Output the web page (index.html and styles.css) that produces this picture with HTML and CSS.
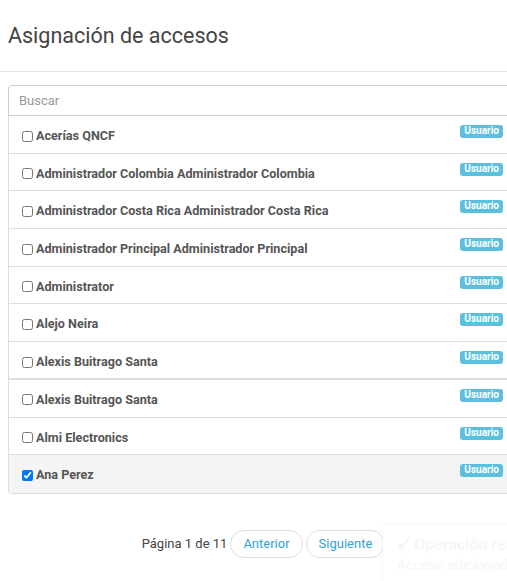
FILE: index.html
```html
<!DOCTYPE html>
<html lang="es">
<head>
  <meta charset="UTF-8">
  <meta name="viewport" content="width=device-width, initial-scale=1.0">
  <title>Asignación de accesos</title>
  <link rel="stylesheet" href="styles.css">
</head>
<body>
  <div class="modal">
    <div class="modal-header">
      <h4>Asignación de accesos</h4>
    </div>
    <div class="modal-body">
      <input type="text" class="search" placeholder="Buscar">
      <ul class="list-group">
        <li class="item"><label><input type="checkbox"> Acerías QNCF</label><span class="badge">Usuario</span></li>
        <li class="item"><label><input type="checkbox"> Administrador Colombia Administrador Colombia</label><span class="badge">Usuario</span></li>
        <li class="item"><label><input type="checkbox"> Administrador Costa Rica Administrador Costa Rica</label><span class="badge">Usuario</span></li>
        <li class="item"><label><input type="checkbox"> Administrador Principal Administrador Principal</label><span class="badge">Usuario</span></li>
        <li class="item"><label><input type="checkbox"> Administrator</label><span class="badge">Usuario</span></li>
        <li class="item"><label><input type="checkbox"> Alejo Neira</label><span class="badge">Usuario</span></li>
        <li class="item item-split"><label><input type="checkbox"> Alexis Buitrago Santa</label><span class="badge">Usuario</span></li>
        <li class="item"><label><input type="checkbox"> Alexis Buitrago Santa</label><span class="badge">Usuario</span></li>
        <li class="item"><label><input type="checkbox"> Almi Electronics</label><span class="badge">Usuario</span></li>
        <li class="item active"><label><input type="checkbox" checked> Ana Perez</label><span class="badge">Usuario</span></li>
      </ul>
      <div class="pager">
        <span class="pager-info">Página 1 de 11</span>
        <button class="pill">Anterior</button>
        <button class="pill">Siguiente</button>
      </div>
    </div>
  </div>

  <!-- toast apareciendo -->
  <div class="toast">
    <div class="toast-title">&#10004; Operación realizada</div>
    <div class="toast-msg">Acceso adicionado.</div>
  </div>
</body>
</html>
```
FILE: styles.css
```css
body {
  margin: 0;
  font-family: Roboto, Arial, sans-serif;
  background-color: #fff;
  color: #555;
  overflow: hidden;
}

.modal {
  width: 527px;
}

.modal-header {
  padding: 22px 8px 21px;
  border-bottom: 1px solid #e5e5e5;
}

.modal-header h4 {
  margin: 0;
  font-size: 21.5px;
  font-weight: 400;
  line-height: 28px;
  color: #444;
}

.modal-body {
  padding: 13px 8px 20px;
}

.search {
  display: block;
  width: 100%;
  height: 31px;
  box-sizing: border-box;
  padding: 4px 10px;
  border: 1px solid #ccc;
  border-radius: 4px 4px 0 0;
  font-family: Roboto, Arial, sans-serif;
  font-size: 13px;
  color: #555;
}

.search::placeholder {
  color: #999;
}

.list-group {
  list-style: none;
  margin: 0;
  padding: 0;
  border: 1px solid #ddd;
  border-top: none;
  border-radius: 0 0 4px 4px;
}

.item {
  display: flex;
  justify-content: space-between;
  align-items: flex-start;
  height: 37.7px;
  box-sizing: border-box;
  padding: 11px 15px 0 12px;
  border-bottom: 1px solid #ddd;
  font-size: 12.6px;
  font-weight: 700;
  line-height: 18px;
  color: #555;
}

.item:last-child {
  border-bottom: none;
}

.item-split {
  border-bottom: 2px solid #ddd;
}

.item.active {
  background-color: #f4f4f4;
}

.item label {
  display: flex;
  align-items: center;
  gap: 3px;
}

.item input {
  width: 11px;
  height: 11px;
  margin: 0 0 0 1px;
}

.badge {
  margin-top: -2px;
  padding: 1px 4px 2px;
  background-color: #5bc0de;
  color: #fff;
  font-size: 10px;
  font-weight: 700;
  line-height: 10px;
  border-radius: 3px;
}

.pager {
  display: flex;
  justify-content: center;
  align-items: center;
  gap: 3px;
  margin-top: 36px;
}

.pager-info {
  font-size: 13px;
  color: #444;
}

.pill {
  height: 28px;
  padding: 0 12px;
  background-color: #fff;
  border: 1px solid #ddd;
  border-radius: 14px;
  font-family: Roboto, Arial, sans-serif;
  font-size: 13px;
  color: #2fa4d6;
  cursor: pointer;
}

.toast {
  position: fixed;
  left: 383px;
  top: 525px;
  width: 200px;
  height: 70px;
  padding: 10px 14px;
  background-color: #fff;
  border-radius: 4px;
  box-shadow: 0 0 6px rgba(0, 0, 0, 0.05);
  color: #f5f5f5;
}

.toast-title {
  font-size: 16px;
  font-weight: 700;
}

.toast-msg {
  font-size: 14px;
  margin-top: 3px;
}
```
